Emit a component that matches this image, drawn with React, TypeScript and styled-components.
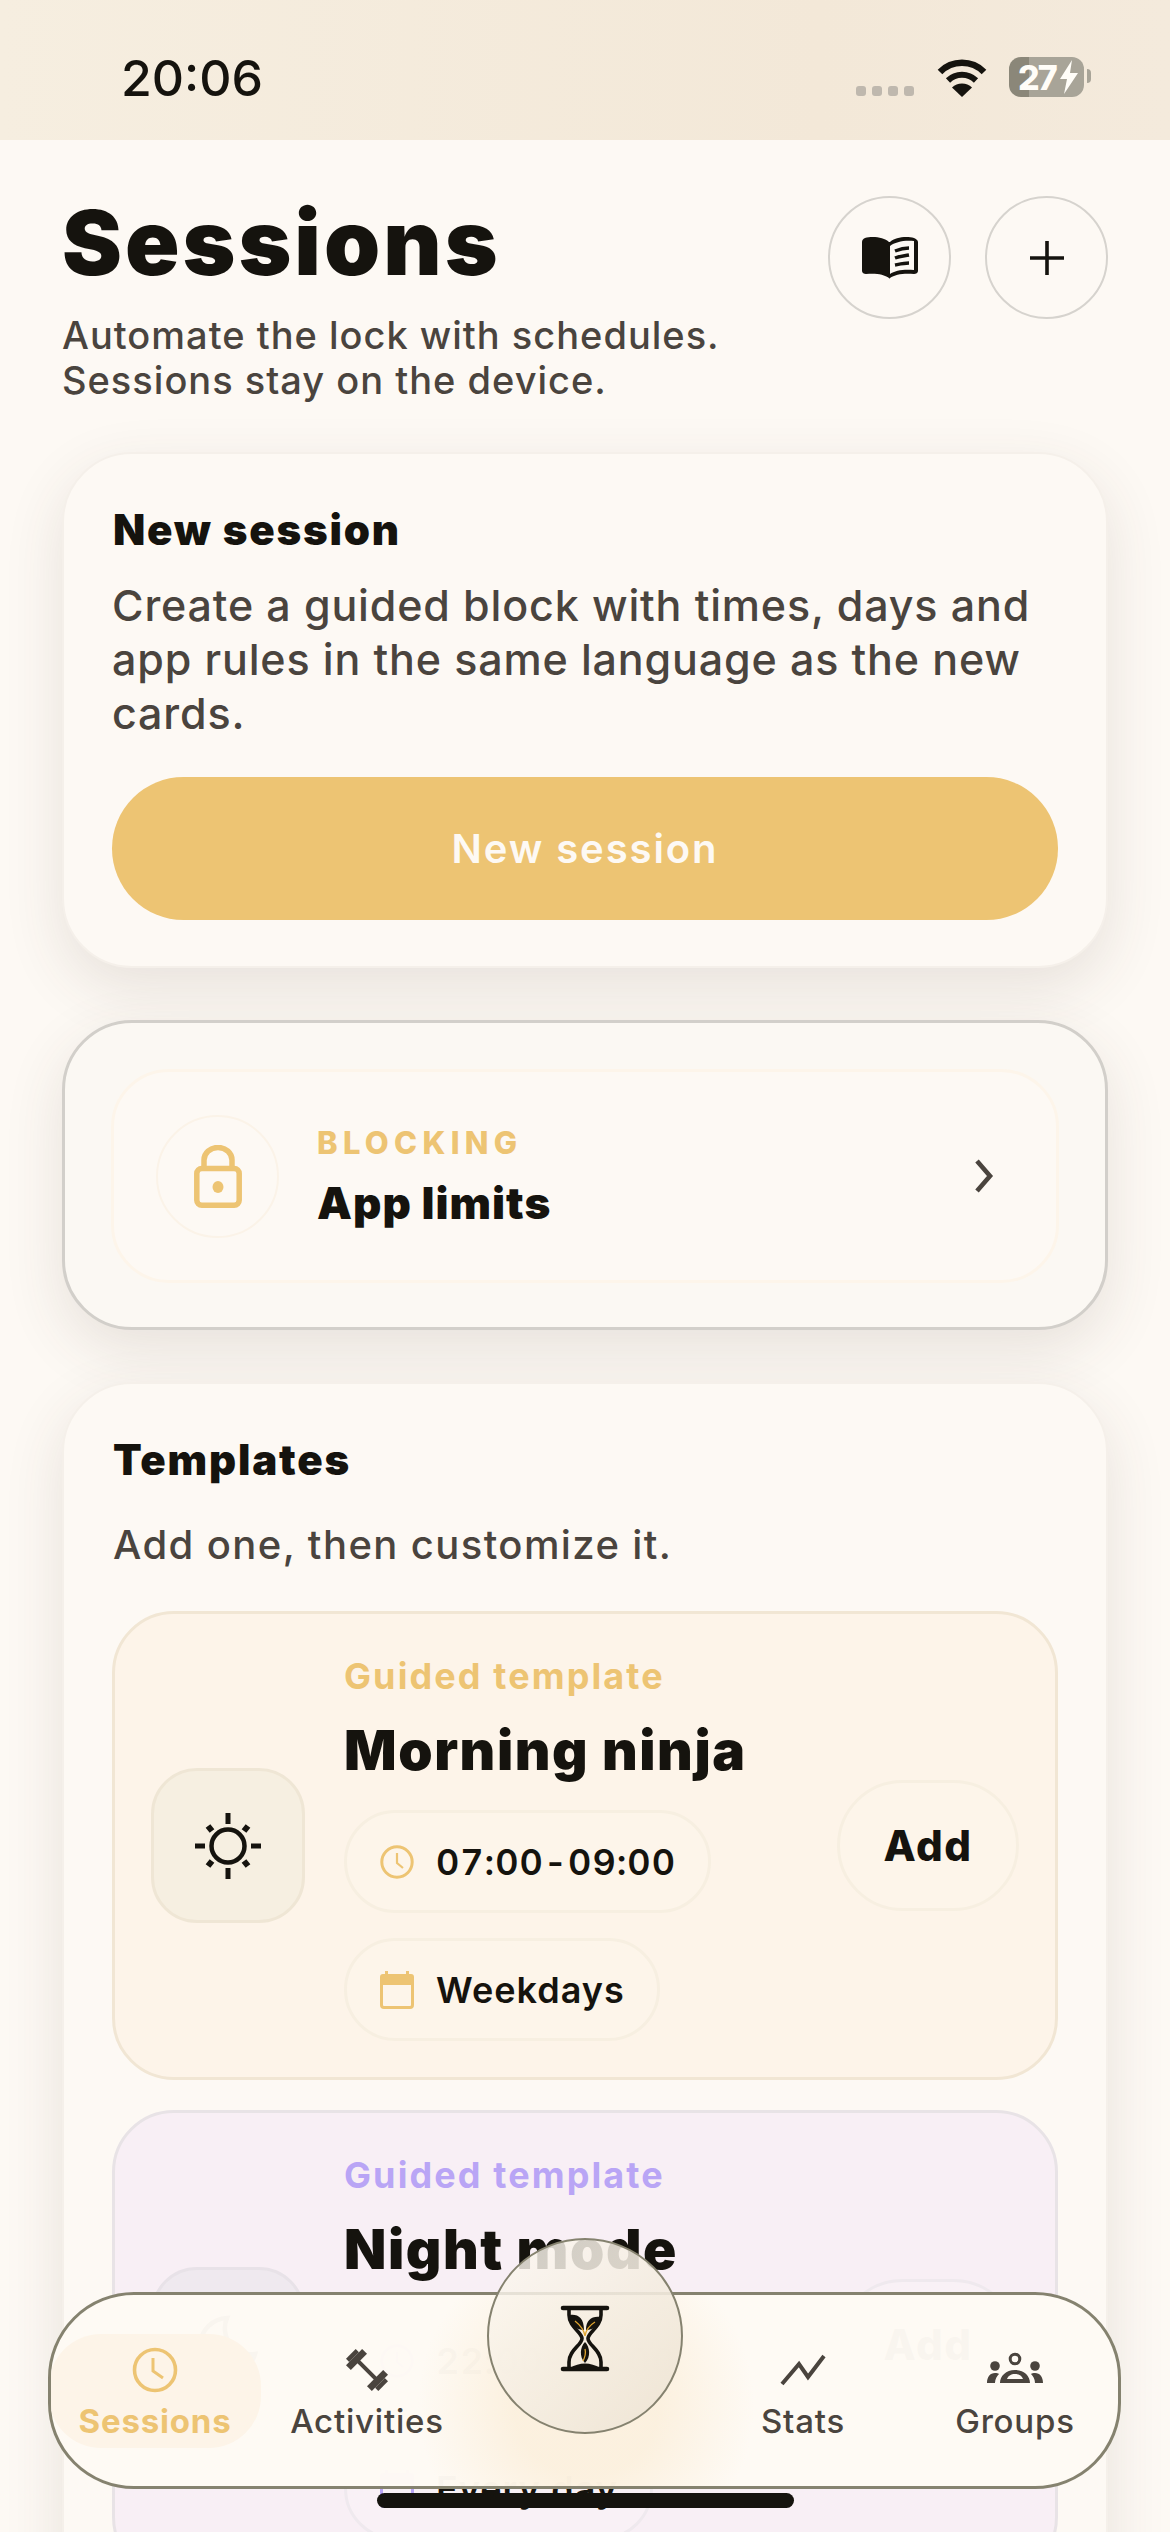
import * as React from "react";
import styled, { createGlobalStyle } from "styled-components";

const ink = "#15130e";
const muted = "#4a443e";
const gold = "#edc473";
const violet = "#b9a5f5";
const cardShadow = "0 20px 60px rgba(70, 60, 50, 0.12)";

const GlobalStyle = createGlobalStyle`
  html, body {
    margin: 0;
    background: #fdf9f4;
  }
  * {
    box-sizing: border-box;
  }
`;

const CardText = styled.p`
  margin: 22px 0 37px;
  font-size: 43px;
  line-height: 54px;
  font-weight: 500;
  letter-spacing: 0.85px;
  color: ${muted};
`;

const Styled = {
  Page: styled.div`
    position: relative;
    width: 1170px;
    height: 2532px;
    overflow: hidden;
    background: #fdf9f4;
    font-family: Inter, "Liberation Sans", sans-serif;
    color: ${ink};
  `,
  StatusBar: styled.div`
    height: 140px;
    display: flex;
    align-items: flex-start;
    justify-content: space-between;
    padding: 52px 86px 0 121px;
    background: linear-gradient(90deg, #f6eee0, #f3e8d8 70%, #f4eadc);
  `,
  Clock: styled.div`
    font-size: 50px;
    line-height: 52px;
    font-weight: 500;
  `,
  StatusIcons: styled.div`
    display: flex;
    align-items: flex-start;
  `,
  Signal: styled.div`
    display: flex;
    gap: 6px;
    margin: 34px 23px 0 0;
  `,
  SignalDot: styled.span`
    width: 10px;
    height: 10px;
    border-radius: 3px;
    background: #bfb8ae;
  `,
  Wifi: styled.svg`
    width: 50px;
    height: 38px;
    margin: 7px 22px 0 0;
  `,
  Battery: styled.div`
    position: relative;
    width: 75px;
    height: 40px;
    margin-top: 5px;
    border-radius: 12px;
    display: flex;
    align-items: center;
    padding-left: 9px;
    background: linear-gradient(90deg, #8b8779 20px, #a8a498 20px);
    color: #fffdf8;
    font-size: 34px;
    font-weight: 800;
    letter-spacing: -2px;
    &::after {
      content: "";
      position: absolute;
      left: 78px;
      top: 12px;
      width: 4px;
      height: 14px;
      border-radius: 0 4px 4px 0;
      background: #a8a498;
    }
  `,
  Bolt: styled.svg`
    width: 20px;
    height: 34px;
    margin-left: 3px;
  `,
  Header: styled.header`
    height: 312px;
    padding: 56px 62px 0;
    display: flex;
    justify-content: space-between;
    align-items: flex-start;
  `,
  Title: styled.h1`
    margin: 1px 0 24px;
    font-size: 90px;
    line-height: 92px;
    font-weight: 900;
    letter-spacing: 3px;
  `,
  Subtitle: styled.p`
    margin: 0;
    font-size: 38px;
    line-height: 45px;
    font-weight: 500;
    letter-spacing: 1px;
    color: ${muted};
  `,
  HeaderActions: styled.div`
    display: flex;
    gap: 34px;
  `,
  RoundButton: styled.button`
    width: 123px;
    height: 123px;
    padding: 0;
    border-radius: 50%;
    border: 2px solid #d6d3ce;
    background: #fdf9f4;
    display: flex;
    align-items: center;
    justify-content: center;
  `,
  Stack: styled.main`
    padding: 0 62px;
    display: flex;
    flex-direction: column;
    gap: 52px;
  `,
  Card: styled.section`
    padding: 50px 48px 46px;
    border-radius: 70px;
    background: #fdf9f4;
    border: 2px solid #f5f0ea;
    box-shadow: ${cardShadow};
  `,
  CardTitle: styled.h2`
    margin: 0 0 0 1px;
    font-size: 42px;
    line-height: 52px;
    font-weight: 900;
    letter-spacing: 1.8px;
  `,
  Hint: styled(CardText)`
    margin: 32px 0 0 1px;
    font-size: 40px;
    letter-spacing: 1.4px;
  `,
  PrimaryButton: styled.button`
    display: block;
    width: 100%;
    height: 143px;
    border: 0;
    border-radius: 72px;
    background: ${gold};
    color: #fdf9f4;
    font-family: inherit;
    font-size: 40px;
    font-weight: 600;
    letter-spacing: 1.9px;
  `,
  LimitsCard: styled.section`
    height: 310px;
    padding: 46px 46px 44px;
    border-radius: 70px;
    background: #fbf8f3;
    border: 3px solid #d2cfca;
    box-shadow: ${cardShadow};
  `,
  LimitsRow: styled.div`
    height: 100%;
    padding: 0 62px 0 42px;
    border-radius: 58px;
    border: 3px solid #fdf5ea;
    background: #fdf9f4;
    display: flex;
    align-items: center;
  `,
  LockCircle: styled.div`
    width: 123px;
    height: 123px;
    margin-right: 38px;
    border-radius: 50%;
    border: 2px solid #fbf3e8;
    display: flex;
    align-items: center;
    justify-content: center;
    flex: none;
  `,
  LimitsText: styled.div`
    flex: 1;
  `,
  Eyebrow: styled.div`
    font-size: 31px;
    line-height: 38px;
    font-weight: 800;
    letter-spacing: 5.3px;
    color: ${gold};
  `,
  LimitsTitle: styled.div`
    margin-top: 16px;
    font-size: 44px;
    line-height: 50px;
    font-weight: 900;
    letter-spacing: 1px;
  `,
  TemplateList: styled.div`
    display: flex;
    flex-direction: column;
    gap: 30px;
    margin-top: 39px;
  `,
  Template: styled.article<{ $violet?: boolean }>`
    height: 469px;
    padding: 0 36px;
    border-radius: 62px;
    border: 3px solid ${(p) => (p.$violet ? "#e8e3e6" : "#f1e6d4")};
    background: ${(p) => (p.$violet ? "#f8eff5" : "#fdf4e9")};
    display: flex;
    align-items: center;
  `,
  Tile: styled.div<{ $violet?: boolean }>`
    width: 154px;
    height: 155px;
    margin-right: 39px;
    border-radius: 46px;
    flex: none;
    border: 3px solid ${(p) => (p.$violet ? "#e8e2e8" : "#efe6d5")};
    background: ${(p) => (p.$violet ? "#efe9ef" : "#f6efe1")};
    display: flex;
    align-items: center;
    justify-content: center;
  `,
  TemplateBody: styled.div`
    flex: 1;
    min-width: 0;
    padding-top: 5px;
  `,
  TemplateLabel: styled.div<{ $violet?: boolean }>`
    font-size: 36px;
    line-height: 42px;
    font-weight: 700;
    letter-spacing: 2.1px;
    color: ${(p) => (p.$violet ? violet : gold)};
  `,
  TemplateName: styled.h3`
    margin: 21px 0 28px;
    font-size: 55px;
    line-height: 64px;
    font-weight: 900;
    letter-spacing: 1.6px;
  `,
  ChipColumn: styled.div`
    display: flex;
    flex-direction: column;
    align-items: flex-start;
    gap: 25px;
  `,
  Chip: styled.div<{ $violet?: boolean }>`
    height: 103px;
    padding: 0 32px 0 33px;
    border-radius: 52px;
    border: 3px solid ${(p) => (p.$violet ? "#efe9ee" : "#f7efe1")};
    background: ${(p) => (p.$violet ? "#f9f1f6" : "#fdf5ea")};
    display: flex;
    align-items: center;
    gap: 22px;
    font-size: 36px;
    font-weight: 600;
    letter-spacing: 1px;
    font-variant-numeric: tabular-nums;
  `,
  AddButton: styled.button<{ $violet?: boolean }>`
    width: 182px;
    height: 131px;
    flex: none;
    padding: 0;
    border-radius: 66px;
    border: 3px solid ${(p) => (p.$violet ? "#efe9ee" : "#f7efe1")};
    background: ${(p) => (p.$violet ? "#f9f1f6" : "#fdf5ea")};
    color: ${ink};
    font-family: inherit;
    font-size: 42px;
    font-weight: 800;
    letter-spacing: 1.5px;
  `,
  TabBar: styled.nav`
    position: absolute;
    left: 48px;
    top: 2292px;
    width: 1073px;
    height: 197px;
    border-radius: 86px;
    border: 3px solid #85826f;
    background: rgba(254, 250, 244, 0.98);
    overflow: hidden;
    display: grid;
    grid-template-columns: 212px 212px 224px 212px 212px;
    align-items: start;
    padding-top: 39px;
    &::before {
      content: "";
      position: absolute;
      left: 365px;
      top: -60px;
      width: 340px;
      height: 340px;
      background: radial-gradient(circle, rgba(247, 224, 186, 0.36) 30%, rgba(247, 224, 186, 0) 70%);
    }
  `,
  Tab: styled.div<{ $active?: boolean }>`
    position: relative;
    height: 114px;
    margin: 0 2px 0 -2px;
    padding-top: 12px;
    border-radius: 52px;
    background: ${(p) => (p.$active ? "#fdf4e8" : "transparent")};
    color: ${(p) => (p.$active ? gold : muted)};
    font-size: 33px;
    line-height: 40px;
    font-weight: ${(p) => (p.$active ? 700 : 500)};
    letter-spacing: 0.8px;
    display: flex;
    flex-direction: column;
    align-items: center;
  `,
  TabIcon: styled.svg<{ $wide?: boolean }>`
    width: ${(p) => (p.$wide ? 56 : 48)}px;
    height: 48px;
    margin-bottom: 7px;
    flex: none;
  `,
  CenterButton: styled.div`
    position: absolute;
    left: 487px;
    top: 2238px;
    width: 196px;
    height: 196px;
    padding-top: 55px;
    border-radius: 50%;
    border: 2px solid #85826f;
    background: linear-gradient(135deg, rgba(253, 249, 242, 0.8), rgba(238, 228, 212, 0.96));
    display: flex;
    justify-content: center;
    align-items: flex-start;
  `,
  HomeIndicator: styled.div`
    position: absolute;
    left: 377px;
    top: 2493px;
    width: 417px;
    height: 15px;
    border-radius: 8px;
    background: ${ink};
  `,
};

const ClockIcon = ({ size = 34, color = gold, width = 3 }) => (
  <svg width={size} height={size} viewBox="0 0 34 34" fill="none" stroke={color} strokeWidth={width}>
    <circle cx="17" cy="17" r="15.2" />
    <path d="M17 8v10l6 5" strokeWidth={width - 0.8} />
  </svg>
);

const CalendarIcon = ({ color = gold }) => (
  <svg width="34" height="38" viewBox="0 0 34 38" fill="none">
    <path d="M5 0h3v3h18V0h3v3h2a3 3 0 0 1 3 3v8H0V6a3 3 0 0 1 3-3h2z" fill={color} />
    <rect x="1.5" y="6" width="31" height="30.5" rx="2.5" stroke={color} strokeWidth="3" />
  </svg>
);

const SunIcon = () => (
  <svg width="70" height="70" viewBox="0 0 70 70" fill="none" stroke={ink}>
    <circle cx="35" cy="35" r="16.5" strokeWidth="4.5" />
    <path d="M35 2v11M35 57v11M2 35h10M58 35h10" strokeWidth="5" />
    <path d="M15 15l4 5M55 15l-4 5M15 55l4-5M55 55l-4-5" strokeWidth="6" />
  </svg>
);

const MoonIcon = () => (
  <svg width="70" height="70" viewBox="0 0 70 70" fill="none" stroke={ink} strokeWidth="4.5">
    <path d="M34 8a28 28 0 1 0 28 36A26 26 0 0 1 34 8z" />
  </svg>
);

const BookIcon = () => (
  <svg width="56" height="44" viewBox="0 0 56 44">
    <path d="M27 6C22 1 10 0 3 2 1 3 0 4 0 6v29c0 2 2 3 4 3 9-1 18 0 23 4z" fill={ink} />
    <path d="M28 6c5-5 17-6 24-4 2 1 4 2 4 4v29c0 2-2 3-4 3-9-1-19 0-24 4-1 1-1 1-1 0V6z" fill={ink} />
    <path d="M28 10c5-4 14-6 24-5v29c-9-1-19 0-24 4z" fill="#fdf9f4" />
    <path d="M33 15c5-2 9-3 14-3M33 22c5-2 9-2 14-3M33 29c5-1 9-2 14-2" stroke={ink} strokeWidth="3.4" fill="none" />
  </svg>
);

const PlusIcon = () => (
  <svg width="38" height="38" viewBox="0 0 38 38" stroke={ink} strokeWidth="3.6">
    <path d="M19 2v34M2 19h34" />
  </svg>
);

const LockIcon = () => (
  <svg width="48" height="63" viewBox="0 0 48 63" fill="none" stroke={gold} strokeWidth="5.5">
    <rect x="2.8" y="23.5" width="42.4" height="36.7" rx="5" />
    <path d="M10 22V15a14 12.5 0 0 1 28 0v7" />
    <ellipse cx="24" cy="42" rx="5.5" ry="6" fill={gold} stroke="none" />
  </svg>
);

const HourglassIcon = () => (
  <svg width="80" height="90" viewBox="0 0 80 90" fill="none">
    <path d="M18 13h44M18 74h44" stroke={ink} strokeWidth="4.6" strokeLinecap="round" />
    <path
      d="M24 14v6c0 12 13 17 13 23.5S24 55 24 67v6M56 14v6c0 12-13 17-13 23.5S56 55 56 67v6"
      stroke={ink}
      strokeWidth="3.6"
    />
    <path d="M25 20c8-1 14 3 14 15-8 0-14-6-14-15zM55 22c-8-1-14 3-14 13 8 0 14-5 14-13z" fill={ink} />
    <path d="M40 47c5 5 6 15 0 21-6-6-5-16 0-21z" fill={ink} />
    <path d="M25 73c9-6 21-6 30 0z" fill={ink} />
    <path d="M30 26c5 4 9 9 10 15M50 27c-5 3-9 8-10 14M40 54c1 4 0 8-2 12" stroke="#e0a52f" strokeWidth="1.3" />
  </svg>
);

const templates = [
  {
    name: "Morning ninja",
    time: "07:00-09:00",
    days: "Weekdays",
    icon: <SunIcon />,
    violet: false,
  },
  {
    name: "Night mode",
    time: "22:00-06:00",
    days: "Every day",
    icon: <MoonIcon />,
    violet: true,
  },
];

const App = () => {
  return (
    <Styled.Page>
      <GlobalStyle />
      <Styled.StatusBar>
        <Styled.Clock>20:06</Styled.Clock>
        <Styled.StatusIcons>
          <Styled.Signal>
            <Styled.SignalDot />
            <Styled.SignalDot />
            <Styled.SignalDot />
            <Styled.SignalDot />
          </Styled.Signal>
          <Styled.Wifi viewBox="0 0 50 38" fill="none">
            <path d="M3 13a31 31 0 0 1 44 0" stroke={ink} strokeWidth="6.5" />
            <path d="M11 21.5a20 20 0 0 1 28 0" stroke={ink} strokeWidth="6" />
            <path d="M25 38l-10-9.500a14.500 14.500 0 0 1 20 0z" fill={ink} />
          </Styled.Wifi>
          <Styled.Battery>
            27
            <Styled.Bolt viewBox="0 0 20 34">
              <path d="M13 0L1 19h7l-3 15L19 13h-8z" fill="#fffdf8" />
            </Styled.Bolt>
          </Styled.Battery>
        </Styled.StatusIcons>
      </Styled.StatusBar>

      <Styled.Header>
        <div>
          <Styled.Title>Sessions</Styled.Title>
          <Styled.Subtitle>
            Automate the lock with schedules.
            <br />
            Sessions stay on the device.
          </Styled.Subtitle>
        </div>
        <Styled.HeaderActions>
          <Styled.RoundButton aria-label="Guide">
            <BookIcon />
          </Styled.RoundButton>
          <Styled.RoundButton aria-label="Add session">
            <PlusIcon />
          </Styled.RoundButton>
        </Styled.HeaderActions>
      </Styled.Header>

      <Styled.Stack>
        <Styled.Card>
          <Styled.CardTitle>New session</Styled.CardTitle>
          <CardText>
            Create a guided block with times, days and app rules in the same language as the new cards.
          </CardText>
          <Styled.PrimaryButton>New session</Styled.PrimaryButton>
        </Styled.Card>

        <Styled.LimitsCard>
          <Styled.LimitsRow>
            <Styled.LockCircle>
              <LockIcon />
            </Styled.LockCircle>
            <Styled.LimitsText>
              <Styled.Eyebrow>BLOCKING</Styled.Eyebrow>
              <Styled.LimitsTitle>App limits</Styled.LimitsTitle>
            </Styled.LimitsText>
            <svg width="20" height="34" viewBox="0 0 20 34" fill="none" stroke={muted} strokeWidth="4.6">
              <path d="M3 2l13 15L3 32" />
            </svg>
          </Styled.LimitsRow>
        </Styled.LimitsCard>

        <Styled.Card>
          <Styled.CardTitle>Templates</Styled.CardTitle>
          <Styled.Hint>Add one, then customize it.</Styled.Hint>
          <Styled.TemplateList>
            {templates.map((t) => (
              <Styled.Template key={t.name} $violet={t.violet}>
                <Styled.Tile $violet={t.violet}>{t.icon}</Styled.Tile>
                <Styled.TemplateBody>
                  <Styled.TemplateLabel $violet={t.violet}>Guided template</Styled.TemplateLabel>
                  <Styled.TemplateName>{t.name}</Styled.TemplateName>
                  <Styled.ChipColumn>
                    <Styled.Chip $violet={t.violet}>
                      <ClockIcon color={t.violet ? violet : gold} />
                      {t.time}
                    </Styled.Chip>
                    <Styled.Chip $violet={t.violet}>
                      <CalendarIcon color={t.violet ? violet : gold} />
                      {t.days}
                    </Styled.Chip>
                  </Styled.ChipColumn>
                </Styled.TemplateBody>
                <Styled.AddButton $violet={t.violet}>Add</Styled.AddButton>
              </Styled.Template>
            ))}
          </Styled.TemplateList>
        </Styled.Card>
      </Styled.Stack>

      <Styled.TabBar>
        <Styled.Tab $active>
          <Styled.TabIcon viewBox="0 0 48 48" fill="none" stroke={gold} strokeWidth="3.6">
            <circle cx="24" cy="24" r="20.5" />
            <path d="M22 12v13l10 7" strokeWidth="3" />
          </Styled.TabIcon>
          Sessions
        </Styled.Tab>
        <Styled.Tab>
          <Styled.TabIcon viewBox="3 3 42 42" fill={muted}>
            <g transform="rotate(45 24 24)">
              <rect x="13" y="22.200" width="22" height="3.600" />
              <rect x="8" y="14" width="6" height="20" />
              <rect x="4" y="18" width="4" height="12" />
              <rect x="34" y="14" width="6" height="20" />
              <rect x="40" y="18" width="4" height="12" />
            </g>
          </Styled.TabIcon>
          Activities
        </Styled.Tab>
        <div />
        <Styled.Tab>
          <Styled.TabIcon viewBox="0 0 48 48" fill="none" stroke={muted} strokeWidth="4">
            <path d="M3 38l17-20 9 13L45 10" />
          </Styled.TabIcon>
          Stats
        </Styled.Tab>
        <Styled.Tab>
          <Styled.TabIcon $wide viewBox="0 0 56 48" fill={muted}>
            <circle cx="8" cy="20" r="4.800" />
            <circle cx="48" cy="20" r="4.800" />
            <circle cx="28" cy="13" r="4.800" fill="none" stroke={muted} strokeWidth="3" />
            <path d="M0 37c0-6 3-10 8-10 2 0 3 0 4 1-2 2-4 5-4 9z" />
            <path d="M56 37c0-6-3-10-8-10-2 0-3 0-4 1 2 2 4 5 4 9z" />
            <path d="M13 37c0-7 6-13 15-13s15 6 15 13zM20 33h16c-1-3-4-5-8-5s-7 2-8 5z" fillRule="evenodd" />
          </Styled.TabIcon>
          Groups
        </Styled.Tab>
      </Styled.TabBar>
      <Styled.CenterButton>
        <HourglassIcon />
      </Styled.CenterButton>
      <Styled.HomeIndicator />
    </Styled.Page>
  );
};

export default App;
